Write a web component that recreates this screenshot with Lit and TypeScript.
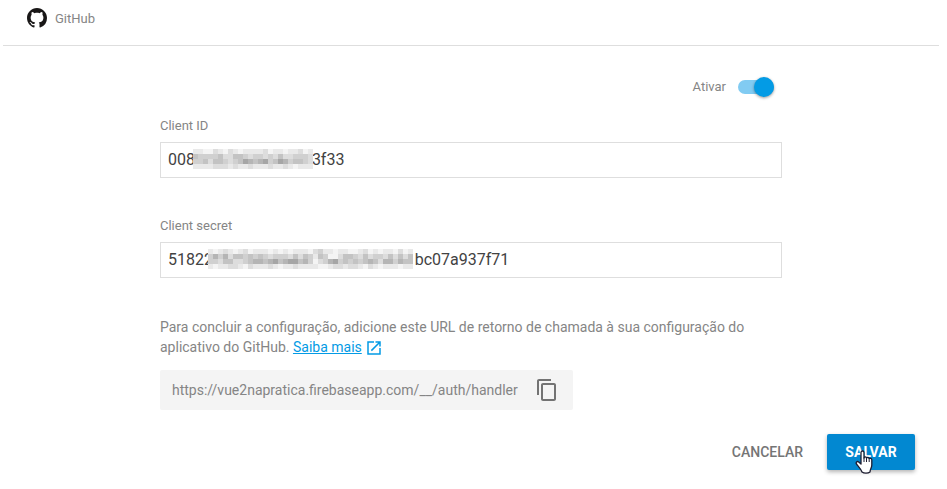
import { LitElement, html, svg, css } from "lit";
import { customElement, property, state } from "lit/decorators.js";

const CELL = 5;
const SHADES = ["#ffffff", "#f4f4f4", "#e9e9e9", "#dddddd", "#d0d0d0", "#c3c3c3", "#b5b5b5", "#a6a6a6"];

/* Figure spaces keep the visible ends of a masked value apart. */
const gap = (n: number) => "\u2007".repeat(n);

@customElement("pixel-mask")
class PixelMask extends LitElement {
  @property({ attribute: false }) rows: string[] = [];

  static styles = css`
    :host {
      display: block;
    }
    svg {
      display: block;
    }
  `;

  render() {
    const w = (this.rows[0]?.length ?? 0) * CELL;
    const h = this.rows.length * CELL;
    return html`<svg width=${w} height=${h} shape-rendering="crispEdges" aria-hidden="true">
      ${this.rows.map((row, y) =>
        [...row].map(
          (c, x) => svg`<rect x=${x * CELL} y=${y * CELL} width=${CELL} height=${CELL} fill=${SHADES[Number(c)]}></rect>`
        )
      )}
    </svg>`;
  }
}

@customElement("app-root")
class AppRoot extends LitElement {
  @state() private enabled = true;

  private idMask = [
    "221132132122223122122312",
    "544445335543443435334443",
    "445355434576567457645543",
    "222233323223222322321222",
  ];

  private secretMask = [
    "21232123122212121222134221221123121221312",
    "46463554545434443535425411355435344353535",
    "44355334566567567756413467454545653664655",
    "21223321322232122322221123323321321222122",
  ];

  static styles = css`
    :host {
      display: block;
      background: #fff;
      color: #858585;
      font-family: Roboto, "Liberation Sans", sans-serif;
      font-size: 13px;
      line-height: 20px;
    }
    * {
      box-sizing: border-box;
    }
    .panel {
      margin: 0 8px 0 3px;
    }
    header {
      display: flex;
      align-items: flex-start;
      gap: 8px;
      height: 46px;
      padding: 8px 24px 0;
      border-bottom: 1px solid #dedede;
      line-height: 22px;
    }
    svg {
      display: block;
      flex: none;
    }
    form {
      display: flex;
      flex-direction: column;
      max-width: 622px;
      margin: 0 auto;
      padding-top: 31px;
    }
    .toggle {
      display: flex;
      align-items: center;
      justify-content: flex-end;
      gap: 12px;
      padding-right: 8px;
    }
    .switch {
      appearance: none;
      display: flex;
      align-items: center;
      width: 36px;
      height: 14px;
      margin: 0;
      border-radius: 7px;
      background: #bdbdbd;
    }
    .switch::before {
      content: "";
      width: 20px;
      height: 20px;
      flex: none;
      border-radius: 50%;
      background: #fafafa;
      box-shadow: 0 1px 3px rgba(0, 0, 0, 0.4);
    }
    .switch:checked {
      justify-content: flex-end;
      background: #81cbf2;
    }
    .switch:checked::before {
      background: #039be5;
    }
    .field {
      display: flex;
      flex-direction: column;
      gap: 6px;
      margin-bottom: 38px;
    }
    .field.first {
      margin-top: 19px;
    }
    .box {
      position: relative;
    }
    .text {
      display: block;
      width: 100%;
      height: 36px;
      padding: 0 7px 2px;
      border: 1px solid #dedede;
      border-radius: 0;
      background: #fff;
      color: #424242;
      font: inherit;
      font-size: 16px;
      outline: none;
    }
    .mask {
      position: absolute;
      top: 7px;
      left: 33px;
    }
    .mask.secret {
      left: 48px;
    }
    .help {
      margin: 1px 0 0;
      font-size: 14px;
    }
    .help a {
      color: #039be5;
    }
    .open {
      display: inline-block;
      vertical-align: -5px;
    }
    .url {
      display: flex;
      align-items: center;
      align-self: flex-start;
      gap: 17px;
      height: 40px;
      margin-top: 13px;
      padding: 0 14px 0 12px;
      border-radius: 2px;
      background: #f4f4f4;
      font-size: 14px;
    }
    button {
      font: inherit;
      border: 0;
      cursor: pointer;
    }
    .copy {
      padding: 0;
      background: none;
      color: #737373;
    }
    footer {
      display: flex;
      justify-content: flex-end;
      gap: 8px;
      padding: 24px 24px 19px;
    }
    .action {
      position: relative;
      height: 36px;
      padding: 0 16px;
      border-radius: 2px;
      background: none;
      color: #757575;
      font-size: 14px;
      font-weight: 500;
    }
    .save {
      min-width: 88px;
      background: #0288d1;
      color: #fff;
      font-weight: 700;
      box-shadow: 0 2px 4px rgba(0, 0, 0, 0.3);
    }
    .pointer {
      position: absolute;
      top: 16px;
      left: 28px;
    }
  `;

  render() {
    return html`
      <div class="panel">
        <header>
          <svg width="20" height="20" viewBox="0 0 16 16" fill="#191717" aria-hidden="true">
            <path d="M8 0C3.58 0 0 3.58 0 8c0 3.54 2.29 6.53 5.47 7.59.4.07.55-.17.55-.38 0-.19-.01-.82-.01-1.49-2.01.37-2.53-.49-2.69-.94-.09-.23-.48-.94-.82-1.13-.28-.15-.68-.52-.01-.53.63-.01 1.08.58 1.23.82.72 1.21 1.87.87 2.33.66.07-.52.28-.87.51-1.07-1.78-.2-3.64-.89-3.64-3.95 0-.87.31-1.59.82-2.15-.08-.2-.36-1.02.08-2.12 0 0 .67-.21 2.2.82.64-.18 1.32-.27 2-.27.68 0 1.36.09 2 .27 1.53-1.04 2.2-.82 2.2-.82.44 1.1.16 1.92.08 2.12.51.56.82 1.27.82 2.15 0 3.07-1.87 3.75-3.65 3.95.29.25.54.73.54 1.48 0 1.07-.01 1.93-.01 2.2 0 .21.15.46.55.38A8.01 8.01 0 0 0 16 8c0-4.42-3.58-8-8-8z"></path>
          </svg>
          <span>GitHub</span>
        </header>
        <form @submit=${(e: Event) => e.preventDefault()}>
          <div class="toggle">
            <label for="enabled">Ativar</label>
            <input
              class="switch"
              id="enabled"
              type="checkbox"
              .checked=${this.enabled}
              @change=${(e: Event) => (this.enabled = (e.target as HTMLInputElement).checked)}
            />
          </div>
          <div class="field first">
            <label for="client-id">Client ID</label>
            <div class="box">
              <input class="text" id="client-id" type="text" .value=${"008" + gap(13) + "3f33"} />
              <pixel-mask class="mask" .rows=${this.idMask}></pixel-mask>
            </div>
          </div>
          <div class="field">
            <label for="client-secret">Client secret</label>
            <div class="box">
              <input
                class="text"
                id="client-secret"
                type="text"
                .value=${"51822" + gap(22) + "\u00a0bc07a937f71"}
              />
              <pixel-mask class="mask secret" .rows=${this.secretMask}></pixel-mask>
            </div>
          </div>
          <p class="help">
            Para concluir a configuração, adicione este URL de retorno de chamada à sua configuração do
            aplicativo do GitHub. <a href="#">Saiba mais</a>
            <svg class="open" width="18" height="18" viewBox="0 0 24 24" fill="#039be5" aria-hidden="true">
              <path d="M19 19H5V5h7V3H3v18h18v-9h-2v7zM14 3v2h3.590l-9.830 9.830 1.410 1.410L19 6.410V10h2V3h-7z"></path>
            </svg>
          </p>
          <div class="url">
            <span>https://vue2napratica.firebaseapp.com/__/auth/handler</span>
            <button class="copy" type="button" aria-label="Copiar">
              <svg width="24" height="24" viewBox="0 0 24 24" fill="currentColor">
                <path d="M16 1H4c-1.100 0-2 .900-2 2v14h2V3h12V1zm3 4H8c-1.100 0-2 .900-2 2v14c0 1.100.900 2 2 2h11c1.100 0 2-.900 2-2V7c0-1.100-.900-2-2-2zm0 16H8V7h11v14z"></path>
              </svg>
            </button>
          </div>
        </form>
        <footer>
          <button class="action" type="button">CANCELAR</button>
          <button class="action save" type="button">
            SALVAR
            <svg class="pointer" width="18" height="24" viewBox="0 0 18 24" aria-hidden="true">
              <path
                d="M6 14V2.500C6 .5 9 .5 9 2.500V8c0-1.500 2.500-1.500 2.500.3C12 7 14.200 7.200 14.200 9c.6-1 2.600-.8 2.600 1v5c0 3-1.800 4-1.800 7-2 1.500-6 1.500-8 0C6 19 3.500 16.500 1.500 14c-1-1.700.6-3.200 2.200-2L6 14z"
                fill="#fff"
                stroke="#1c1c30"
                stroke-width="1.300"
                stroke-linejoin="round"
              ></path>
              <path d="M9 7.500V12M11.500 8.500V12M14.200 9.500V12" fill="none" stroke="#1c1c30"></path>
            </svg>
          </button>
        </footer>
      </div>
    `;
  }
}
